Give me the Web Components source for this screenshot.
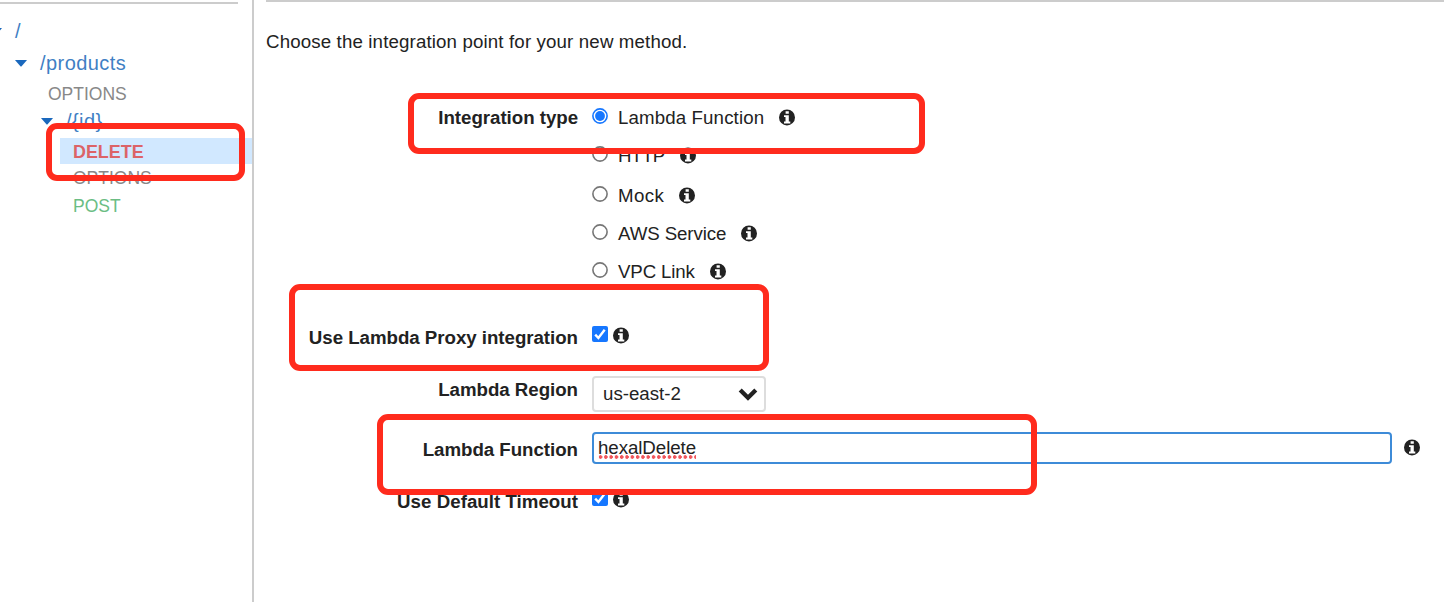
<!DOCTYPE html>
<html lang="en">
<head>
<meta charset="utf-8">
<title>API method setup</title>
<style>
html,body{margin:0;height:100%;background:#fff;overflow:hidden}
body{font:18.7px/28px "Liberation Sans",Arial,sans-serif;color:#222}
</style>
</head>
<body>
<api-console></api-console>
<script>
const define=(name,html)=>customElements.define(name,class extends HTMLElement{
  constructor(){super();this.attachShadow({mode:'open'}).innerHTML=html;}
});

define('info-icon',`<style>:host{display:block;width:16px;height:16px;flex:none}svg{display:block;width:16px;height:16px;fill:#222;overflow:visible}</style>
<svg viewBox="0 0 16 16"><path transform="translate(0 .4)" fill-rule="evenodd" d="M8 0a8 8 0 1 1 0 16A8 8 0 0 1 8 0zM6.6 1.8v2.6h3.2V1.8zM5 5.8v1.8h1.5v4.5H5v1.9h6.3v-1.9H9.8V5.8z"/></svg>`);

define('radio-option',`<style>
:host{display:flex;align-items:flex-start;height:26px}
.dot{width:16px;height:16px;margin:4px 10px 0 0;flex:none}
.dot circle{fill:#fff;stroke:#767676;stroke-width:1.6}
.dot .in{display:none}
:host([checked]) .dot circle{stroke:#1677ff}
:host([checked]) .dot .in{display:block;fill:#1677ff;stroke:none}
span{white-space:nowrap}
info-icon{margin:5px 0 0 15px}
</style>
<svg class="dot" viewBox="0 0 16 16"><circle cx="8" cy="8" r="7.1"/><circle class="in" cx="8" cy="8" r="4.9"/></svg><span><slot></slot></span><info-icon></info-icon>`);

define('check-box',`<style>:host{display:flex;gap:5px}svg{display:block;width:16px;height:16px}info-icon{margin-top:1px}</style>
<svg viewBox="0 0 16 16"><rect width="16" height="16" rx="2" fill="#1677ff"/><path d="M3.2 8.6 6.4 12 12.7 3.7" fill="none" stroke="#fff" stroke-width="2.4"/></svg><info-icon></info-icon>`);

define('select-box',`<style>
:host{display:flex;box-sizing:border-box;width:174px;height:36px;border:2px solid #ddd;border-radius:4px;justify-content:space-between;padding:2px 6px 0 9px}
svg{display:block;width:20px;height:14px;margin-top:7px}
</style><span><slot></slot></span><svg viewBox="0 0 20 14"><path d="M2.2 3 10 10.7 17.8 3" fill="none" stroke="#222" stroke-width="4.3"/></svg>`);

define('text-field',`<style>
:host{display:block;box-sizing:border-box;width:800px;height:32px;border:2px solid #3d8bd8;border-radius:4px;padding:0 4px;letter-spacing:-.06px}
span{display:inline-block;height:28px;background:radial-gradient(circle at 2.5px 2px,#f0555a 1.5px,transparent 2.1px) 0 21px/5.3px 4px repeat-x}
</style><span><slot></slot></span>`);

define('form-row',`<style>
:host{display:grid;grid-template-columns:312px 1fr;column-gap:14px;align-items:start}
.label{font-weight:bold;text-align:right;white-space:nowrap;letter-spacing:-.03px;padding-top:var(--label-top,0)}
</style><div class="label"><slot name="label"></slot></div><div><slot></slot></div>`);

define('tree-row',`<style>
:host{display:flex;height:26px;white-space:nowrap;color:#888;font-size:17.5px}
:host([kind=path]){color:#3f80c4;font-size:20px;letter-spacing:.43px;line-height:26px}
:host([kind=post]){color:#6bbd84}
:host([kind=delete]){color:#dc6367;font-weight:bold;background:#d1e8ff;font-size:17.9px}
svg{display:none;flex:none;width:12px;height:7px;margin:10px 13px 0 0;fill:#1a68bd}
:host([kind=path]) svg{display:block}
</style><svg viewBox="0 0 12 7"><path d="M.4 0h11.2v.6L6.6 6.3q-.6.6-1.2 0L.4.6z"/></svg><span><slot></slot></span>`);

define('resource-tree',`<style>
:host{display:block;box-sizing:border-box;width:254px;height:602px;flex:none;border-right:2px solid #ccc;padding-top:2px;overflow:hidden}
.rule{height:2px;width:238px;background:#ccc;margin-bottom:14px}
.root{margin:0 0 6px -10px}.products{margin:0 0 4px 15px}.opt{margin:0 0 2px 48px}.id{margin:0 0 4px 41px}
.del{margin-left:60px;padding-left:13px}.opt2{margin:0 0 2px 73px}.post{margin-left:73px}
</style>
<div class="rule"></div>
<tree-row class="root" kind="path">/</tree-row>
<tree-row class="products" kind="path">/products</tree-row>
<tree-row class="opt">OPTIONS</tree-row>
<tree-row class="id" kind="path">/{id}</tree-row>
<tree-row class="del" kind="delete">DELETE</tree-row>
<tree-row class="opt2">OPTIONS</tree-row>
<tree-row class="post" kind="post">POST</tree-row>`);

define('integration-form',`<style>
:host{display:block;flex:1;min-width:0;padding-left:12px}
.rule{height:2px;background:#ccc}
p{height:26px;margin:26px 0 50px;letter-spacing:.14px}
.radios{display:grid;grid-template-rows:38px 40px 38px 38px 26px}
.type{height:218px}
.proxy{height:54px;--label-top:2px}
.proxy check-box{margin-top:4px}
.region{height:56px}
.func{height:56px;--label-top:4px}
.timeout check-box{margin-top:2px}
.field{display:flex;gap:12px}
.field info-icon{margin-top:7px}
</style>
<div class="rule"></div>
<p>Choose the integration point for your new method.</p>
<form-row class="type"><span slot="label">Integration type</span><div class="radios">
<radio-option checked style="letter-spacing:.12px">Lambda Function</radio-option><radio-option style="letter-spacing:-.5px">HTTP</radio-option><radio-option style="letter-spacing:.4px">Mock</radio-option><radio-option style="letter-spacing:-.1px">AWS Service</radio-option><radio-option style="letter-spacing:-.15px">VPC Link</radio-option></div></form-row>
<form-row class="proxy"><span slot="label">Use Lambda Proxy integration</span><check-box></check-box></form-row>
<form-row class="region"><span slot="label">Lambda Region</span><select-box>us-east-2</select-box></form-row>
<form-row class="func"><span slot="label">Lambda Function</span><div class="field"><text-field>hexalDelete</text-field><info-icon></info-icon></div></form-row>
<form-row class="timeout"><span slot="label" style="letter-spacing:.03px">Use Default Timeout</span><check-box></check-box></form-row>`);

define('mark-box',`<style>:host{display:block;position:absolute;box-sizing:border-box;border:6px solid #ff2b1d;border-radius:11px}</style>`);

define('api-console',`<style>
:host{display:flex;position:relative;width:1444px;height:602px;overflow:hidden;background:#fff}
</style>
<resource-tree></resource-tree><integration-form></integration-form>
<mark-box style="left:46px;top:123px;width:199px;height:58px"></mark-box>
<mark-box style="left:408px;top:93px;width:517px;height:61px"></mark-box>
<mark-box style="left:289px;top:284px;width:480px;height:87px"></mark-box>
<mark-box style="left:377px;top:414px;width:660px;height:81px"></mark-box>`);
</script>
</body>
</html>
